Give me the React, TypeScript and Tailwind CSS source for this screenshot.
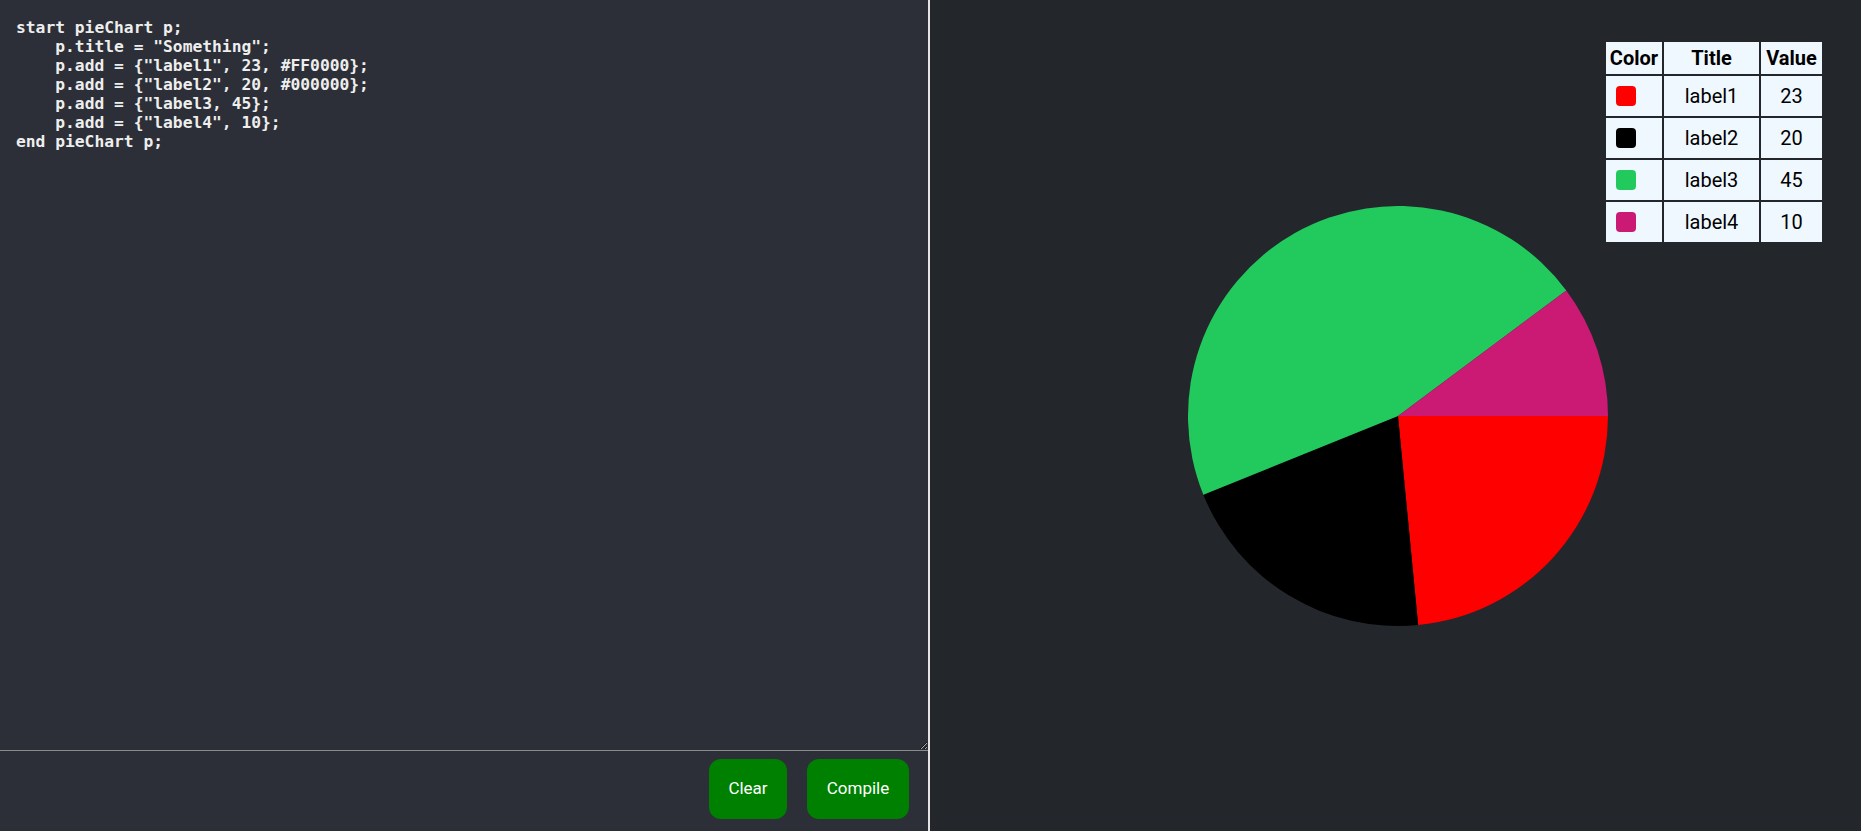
import React from "react";

const code = `start pieChart p;
    p.title = "Something";
    p.add = {"label1", 23, #FF0000};
    p.add = {"label2", 20, #000000};
    p.add = {"label3, 45};
    p.add = {"label4", 10};
end pieChart p;`;

const data = [
  { label: "label1", value: 23, color: "#ff0000" },
  { label: "label2", value: 20, color: "#000000" },
  { label: "label3", value: 45, color: "#22ca5e" },
  { label: "label4", value: 10, color: "#ca1a74" },
];

function Pie() {
  const r = 210;
  const c = 210;
  const total = data.reduce((s, d) => s + d.value, 0);
  let acc = 0;
  const paths = data.map((d) => {
    const a0 = (acc / total) * Math.PI * 2;
    acc += d.value;
    const a1 = (acc / total) * Math.PI * 2;
    const x0 = c + r * Math.cos(a0);
    const y0 = c + r * Math.sin(a0);
    const x1 = c + r * Math.cos(a1);
    const y1 = c + r * Math.sin(a1);
    const large = a1 - a0 > Math.PI ? 1 : 0;
    return (
      <path
        key={d.label}
        d={`M ${c} ${c} L ${x0} ${y0} A ${r} ${r} 0 ${large} 1 ${x1} ${y1} Z`}
        fill={d.color}
      />
    );
  });
  return (
    <svg width="420" height="420" viewBox="0 0 420 420">
      {paths}
    </svg>
  );
}

export default function App() {
  return (
    <div className="flex h-[831px] w-full overflow-hidden" style={{ fontFamily: "Roboto, 'Noto Sans', sans-serif" }}>
      <div className="flex h-full w-[928px] flex-col bg-[#2c2f37]">
        <textarea
          defaultValue={code}
          spellCheck={false}
          className="block h-[751px] w-full resize border-0 border-b border-[#8c8c8c] bg-transparent pl-[16px] pr-4 pt-[18px] text-[16.3px] font-bold leading-[19px] text-[#eeeeee] outline-none [color-scheme:dark]"
          style={{ fontFamily: "'DejaVu Sans Mono', monospace" }}
        />
        <div className="flex flex-1 items-start justify-end gap-5 pr-[19px] pt-[8px]">
          <button className="flex h-[60px] w-[78px] items-center justify-center rounded-[12px] bg-[#008000] text-[17px] text-white">Clear</button>
          <button className="flex h-[60px] w-[102px] items-center justify-center rounded-[12px] bg-[#008000] text-[17px] text-white">Compile</button>
        </div>
      </div>
      <div className="h-full w-[2px] bg-[#e4e4e4]" />
      <div className="relative flex h-full flex-1 items-center justify-center bg-[#23272b]">
        <div className="ml-[5px]">
          <Pie />
        </div>
        <table className="absolute right-[37px] top-[40px] border-separate border-spacing-[2px] text-[20px] text-black">
          <thead>
            <tr className="h-[32px]">
              <th className="w-[56px] bg-[#f0f8ff] p-0 font-bold">Color</th>
              <th className="w-[95px] bg-[#f0f8ff] p-0 font-bold">Title</th>
              <th className="w-[61px] bg-[#f0f8ff] p-0 font-bold">Value</th>
            </tr>
          </thead>
          <tbody>
            {data.map((d) => (
              <tr key={d.label} className="h-[40px]">
                <td className="bg-[#f0f8ff] p-0 pl-[10px]">
                  <div className="h-[20px] w-[20px] rounded-[4px]" style={{ backgroundColor: d.color }} />
                </td>
                <td className="bg-[#f0f8ff] p-0 text-center">{d.label}</td>
                <td className="bg-[#f0f8ff] p-0 text-center">{d.value}</td>
              </tr>
            ))}
          </tbody>
        </table>
      </div>
    </div>
  );
}
